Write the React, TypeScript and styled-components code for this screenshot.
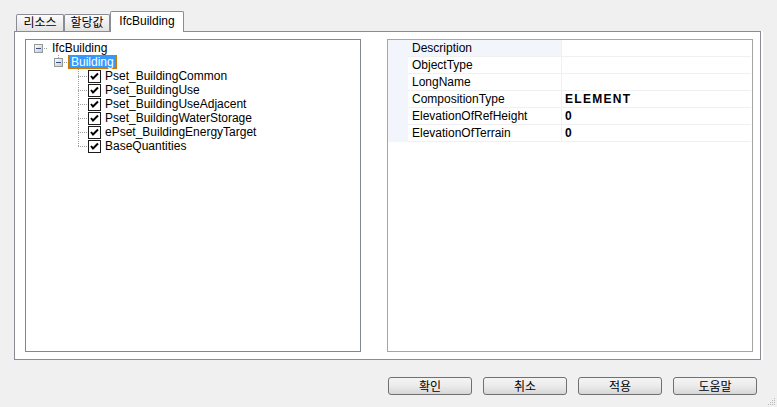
import React from 'react';
import styled, { createGlobalStyle } from 'styled-components';

const Global = createGlobalStyle`
  html, body { margin: 0; padding: 0; background: #f0f0f0; }
  body {
    font-family: "Liberation Sans", "Noto Sans CJK KR", sans-serif;
    font-size: 12px;
    color: #000;
  }
`;

const Dialog = styled.div`
  position: relative;
  width: 777px;
  height: 407px;
  box-sizing: border-box;
  padding-top: 11px;
  display: flex;
  flex-direction: column;
  background: #f0f0f0;
`;

const TabStrip = styled.div`
  display: flex;
  align-items: flex-end;
  height: 20px;
  margin-left: 16px;
  position: relative;
  z-index: 1;
`;

const Tab = styled.div<{ $active?: boolean; $w: number }>`
  box-sizing: border-box;
  width: ${p => p.$w}px;
  height: ${p => (p.$active ? 21 : 17)}px;
  margin-bottom: ${p => (p.$active ? -1 : 0)}px;
  border: 1px solid #898c95;
  border-bottom: none;
  border-radius: 2px 2px 0 0;
  background: ${p => (p.$active ? '#ffffff' : 'linear-gradient(#fbfbfb, #e3e3e3)')};
  display: flex;
  align-items: center;
  justify-content: center;
  padding-bottom: ${p => (p.$active ? 2 : 0)}px;
  font-family: "Liberation Sans", "Noto Sans CJK KR", sans-serif;
  font-size: 12px;
  line-height: 14px;
  white-space: nowrap;
`;

const Panel = styled.div`
  box-sizing: border-box;
  margin-left: 14px;
  width: 747px;
  height: 329px;
  border: 1px solid #898c95;
  background: #ffffff;
  box-shadow: 1px 0 0 #ffffff, 2px 0 0 #ffffff;
  padding: 7px 0 0 10px;
  display: flex;
  gap: 26px;
`;

const TreeBox = styled.div`
  box-sizing: border-box;
  width: 336px;
  height: 313px;
  border: 1px solid #828790;
  background: #fff;
  padding: 1px 0 0 2px;
  display: flex;
  flex-direction: column;
`;

const TreeRow = styled.div`
  display: flex;
  align-items: center;
  height: 14px;
`;

const Indent = styled.div<{ $level: number }>`
  width: ${p => p.$level * 20}px;
  flex: none;
`;

const TreeLabel = styled.span<{ $selected?: boolean }>`
  box-sizing: border-box;
  height: 14px;
  line-height: 12px;
  padding: 0 2px;
  border: 1px ${p => (p.$selected ? 'dotted #d07a00' : 'solid transparent')};
  background: ${p => (p.$selected ? '#3399ff' : 'transparent')};
  color: ${p => (p.$selected ? '#ffffff' : '#000000')};
  white-space: nowrap;
  margin-left: ${p => (p.$selected ? 0 : 1)}px;
`;

const CheckWrap = styled.div`
  width: 13px;
  height: 13px;
  flex: none;
  display: flex;
`;

const GridBox = styled.div`
  box-sizing: border-box;
  width: 366px;
  height: 313px;
  border: 1px solid #a5a5a5;
  background: #fff;
  display: flex;
  flex-direction: column;
`;

const PropRow = styled.div`
  display: grid;
  grid-template-columns: 20px 154px 1fr;
  height: 17px;
  margin-right: 1px;
`;

const Gutter = styled.div`
  background: #f2f5fb;
`;

const PropName = styled.div<{ $selected?: boolean }>`
  box-sizing: border-box;
  background: ${p => (p.$selected ? '#f2f5fb' : '#ffffff')};
  border-right: 1px solid #f0f0f0;
  border-bottom: 1px solid #f0f0f0;
  padding-left: 4px;
  line-height: 16px;
  white-space: nowrap;
`;

const PropValue = styled.div`
  box-sizing: border-box;
  border-bottom: 1px solid #f0f0f0;
  padding-left: 3px;
  line-height: 16px;
  font-weight: bold;
  letter-spacing: 1.3px;
  white-space: nowrap;
`;

const ButtonRow = styled.div`
  display: flex;
  justify-content: flex-end;
  gap: 11px;
  padding-right: 20px;
  margin-top: 17px;
`;

const Button = styled.button`
  box-sizing: border-box;
  width: 84px;
  height: 18px;
  padding: 0;
  border: 1px solid #707070;
  border-radius: 3px;
  background: linear-gradient(#f4f4f4 0%, #ebebeb 50%, #d6d6d6 100%);
  font-family: "Noto Sans CJK KR", "Liberation Sans", sans-serif;
  font-size: 12px;
  line-height: 16px;
  color: #000;
`;

const Grip = styled.svg`
  position: absolute;
  right: 1px;
  bottom: 1px;
`;

type Conn = { box?: boolean; top?: boolean; bottom?: boolean; h?: boolean };

const DOT = '#a0a0a0';

function Connector({ c }: { c: Conn }) {
  const dots: React.ReactNode[] = [];
  const cx = 10;
  const cy = 7;
  if (c.top) {
    for (let y = 0; y < (c.box ? 3 : cy); y += 2) dots.push(<rect key={'t' + y} x={cx} y={y} width={1} height={1} fill={DOT} />);
  }
  if (c.bottom) {
    for (let y = cy + 1; y < 14; y += 2) dots.push(<rect key={'b' + y} x={cx} y={y} width={1} height={1} fill={DOT} />);
  }
  if (c.h) {
    for (let x = c.box ? 16 : cx; x < 20; x += 2) dots.push(<rect key={'h' + x} x={x} y={cy} width={1} height={1} fill={DOT} />);
  }
  return (
    <svg width={20} height={14} style={{ flex: 'none', display: 'block' }}>
      {dots}
      {c.box && (
        <g>
          <defs>
            <linearGradient id="bx" x1="0" y1="0" x2="1" y2="1">
              <stop offset="0" stopColor="#ffffff" />
              <stop offset="1" stopColor="#c8c8c0" />
            </linearGradient>
          </defs>
          <rect x={6.5} y={3.5} width={8} height={8} fill="url(#bx)" stroke="#919b9c" />
          <rect x={8} y={7} width={5} height={1} fill="#3a4e8c" />
        </g>
      )}
    </svg>
  );
}

function CheckBox() {
  return (
    <CheckWrap>
      <svg width={13} height={13}>
        <rect x={0.5} y={0.5} width={12} height={12} fill="#fff" stroke="#1c1c1c" />
        <path d="M3 6 L5 8.5 L10 3.5" fill="none" stroke="#000" strokeWidth={2} />
      </svg>
    </CheckWrap>
  );
}

const psets = [
  'Pset_BuildingCommon',
  'Pset_BuildingUse',
  'Pset_BuildingUseAdjacent',
  'Pset_BuildingWaterStorage',
  'ePset_BuildingEnergyTarget',
  'BaseQuantities',
];

const props: [string, string][] = [
  ['Description', ''],
  ['ObjectType', ''],
  ['LongName', ''],
  ['CompositionType', 'ELEMENT'],
  ['ElevationOfRefHeight', '0'],
  ['ElevationOfTerrain', '0'],
];

export default function App() {
  const gripDots: [number, number][] = [
    [8, 0],
    [6, 2], [8, 2],
    [4, 4], [6, 4], [8, 4],
    [2, 6], [4, 6], [6, 6], [8, 6],
  ];
  return (
    <>
      <Global />
      <Dialog>
        <TabStrip>
          <Tab $w={48}>리소스</Tab>
          <Tab $w={46}>할당값</Tab>
          <Tab $w={74} $active>IfcBuilding</Tab>
        </TabStrip>
        <Panel>
          <TreeBox>
            <TreeRow>
              <Connector c={{ box: true, h: true }} />
              <TreeLabel>IfcBuilding</TreeLabel>
            </TreeRow>
            <TreeRow>
              <Indent $level={1} />
              <Connector c={{ box: true, top: true, h: true }} />
              <TreeLabel $selected>Building</TreeLabel>
            </TreeRow>
            {psets.map((p, i) => (
              <TreeRow key={p}>
                <Indent $level={2} />
                <Connector c={{ top: true, bottom: i < psets.length - 1, h: true }} />
                <CheckBox />
                <TreeLabel>{p}</TreeLabel>
              </TreeRow>
            ))}
          </TreeBox>
          <GridBox>
            {props.map(([n, v], i) => (
              <PropRow key={n}>
                <Gutter />
                <PropName $selected={i === 0}>{n}</PropName>
                <PropValue>{v}</PropValue>
              </PropRow>
            ))}
          </GridBox>
        </Panel>
        <ButtonRow>
          <Button>확인</Button>
          <Button>취소</Button>
          <Button>적용</Button>
          <Button>도움말</Button>
        </ButtonRow>
        <Grip width={10} height={8}>
          {gripDots.map(([x, y]) => (
            <g key={x + '-' + y}>
              <rect x={x} y={y} width={1} height={1} fill="#b8b8b8" />
            </g>
          ))}
        </Grip>
      </Dialog>
    </>
  );
}
